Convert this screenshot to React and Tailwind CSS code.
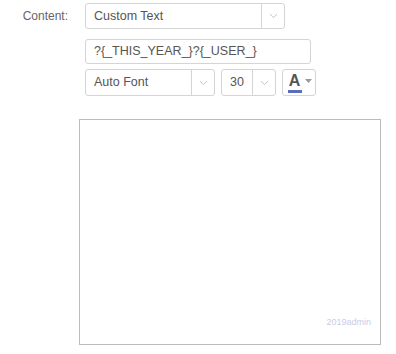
const Chevron = () => (
  <svg width="9" height="6" viewBox="0 0 9 6" fill="none">
    <path d="M1 1.2 L4.5 4.6 L8 1.2" stroke="#c4c4c4" strokeWidth="1" />
  </svg>
);

function Select({ value, width, height }) {
  return (
    <div
      className={`flex items-stretch border border-[#d4d4d4] rounded-[3px] bg-white ${width} ${height}`}
    >
      <div className="flex-1 flex items-center pl-[8px] text-[12.5px] text-[#555]">
        {value}
      </div>
      <div className="w-[23px] flex items-center justify-center border-l border-[#d4d4d4]">
        <Chevron />
      </div>
    </div>
  );
}

export default function App() {
  return (
    <div
      className="w-[396px] h-[354px] bg-white relative"
      style={{ fontFamily: '"Liberation Sans", Arial, sans-serif' }}
    >
      <div className="flex pt-[3px]">
        <div className="w-[85px] pr-[17px] h-[26px] flex items-center justify-end text-[12px] text-[#666]">
          Content:
        </div>
        <div className="flex flex-col">
          <Select value="Custom Text" width="w-[200px]" height="h-[26px]" />
          <div className="mt-[10px] w-[226px] h-[25px] border border-[#d4d4d4] rounded-[3px] flex items-center pl-[8px] text-[12.5px] text-[#555]">
            ?{"{"}_THIS_YEAR_{"}"}?{"{"}_USER_{"}"}
          </div>
          <div className="mt-[5px] flex gap-[6px]">
            <Select value="Auto Font" width="w-[130px]" height="h-[27px]" />
            <Select value="30" width="w-[55px]" height="h-[27px]" />
            <div className="w-[34px] h-[27px] border border-[#d4d4d4] rounded-[3px] flex items-center justify-center gap-[3px] pl-[1px]">
              <div className="flex flex-col items-center">
                <span className="text-[16px] font-bold leading-[15px] text-[#555]">A</span>
                <span className="mt-[2px] w-[14px] h-[3px] bg-[#5b6bc0]" />
              </div>
              <svg width="7" height="4" viewBox="0 0 7 4" className="mt-[-4px]">
                <path d="M0 0 L7 0 L3.5 4 Z" fill="#999" />
              </svg>
            </div>
          </div>
        </div>
      </div>
      <div className="ml-[79px] mt-[23px] w-[302px] h-[226px] border border-[#bcbcbc] flex items-end justify-end pr-[9px] pb-[15px]">
        <span className="text-[9px] text-[#c9cce8]">2019admin</span>
      </div>
    </div>
  );
}
